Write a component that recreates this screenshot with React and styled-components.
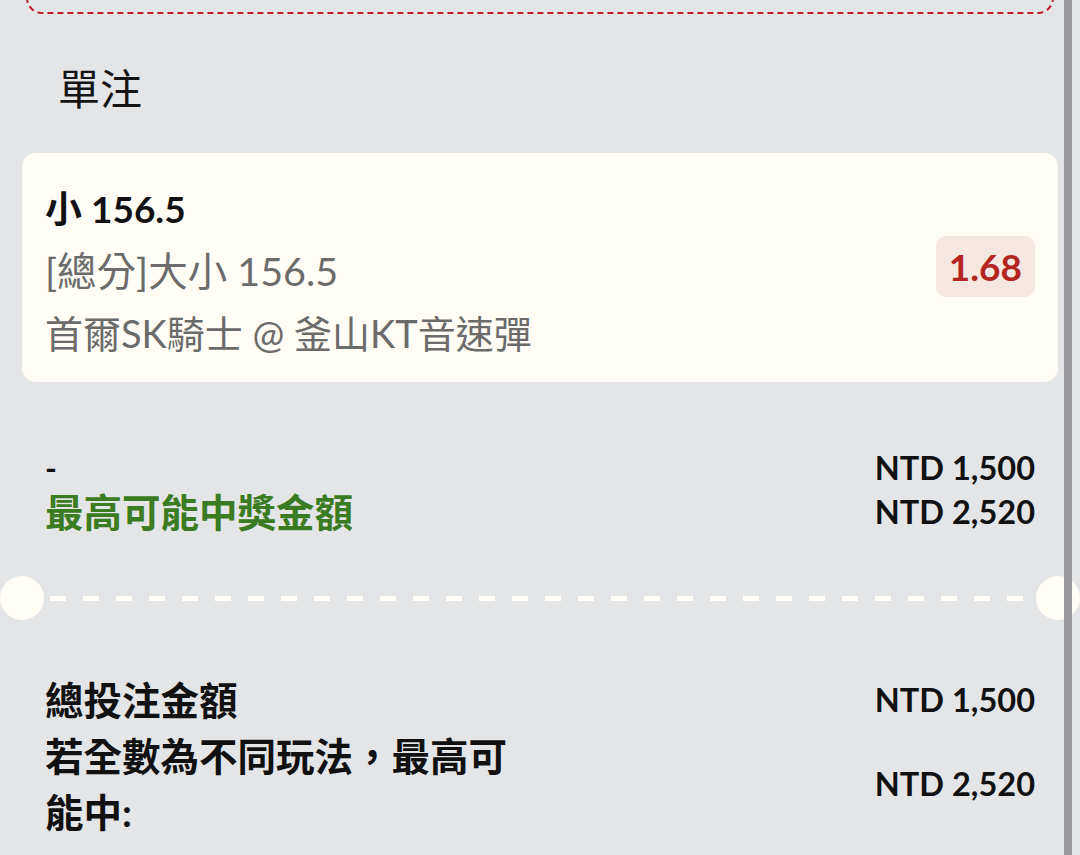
import React from 'react';
import styled, { createGlobalStyle } from 'styled-components';

const GlobalStyle = createGlobalStyle`
  html, body {
    margin: 0;
    padding: 0;
    background: #e4e5e7;
  }
  body {
    font-family: Lato, "Noto Sans CJK TC", "Noto Sans", sans-serif;
    color: #111;
  }
`;

const Page = styled.div`
  position: relative;
  width: 1080px;
  height: 855px;
  overflow: hidden;
  background: #e4e5e7;
`;

const ScrollEdge = styled.div`
  position: absolute;
  top: 0;
  bottom: 0;
  right: 8px;
  width: 8px;
  background: #9a9a9c;
  z-index: 2;
`;

const Content = styled.div`
  padding: 0 22px;
`;

const TicketEdge = styled.div`
  height: 30px;
  margin: -18px 4px 0;
  border: 2.5px dashed #bf1f2a;
  border-top: none;
  border-radius: 0 0 16px 16px;
`;

const SectionTitle = styled.h2`
  margin: 50px 0 0;
  padding-left: 36px;
  font-size: 42px;
  line-height: 50px;
  font-weight: 400;
  color: #151515;
`;

const BetCard = styled.div`
  margin-top: 39px;
  background: #fffdf5;
  border-radius: 14px;
  padding: 25px 23px 18px;
  display: flex;
  align-items: center;
  justify-content: space-between;
`;

const BetInfo = styled.div`
  display: flex;
  flex-direction: column;
`;

const Selection = styled.div`
  font-size: 37px;
  line-height: 62px;
  font-weight: 700;
  color: #111;
`;

const BetLine = styled.div`
  font-size: ${p => p.$size || 38}px;
  line-height: 62px;
  color: #6b6b6b;
`;

const Odds = styled.div`
  background: #f7e7e1;
  color: #b3261f;
  font-weight: 700;
  font-size: 37px;
  line-height: 61px;
  padding: 0 13px;
  margin-bottom: 9px;
  border-radius: 10px;
`;

const AmountGrid = styled.div`
  display: grid;
  grid-template-columns: 1fr auto;
  align-items: center;
  padding: 0 23px;
  margin-top: ${p => p.$top}px;
`;

const Label = styled.div`
  font-size: ${p => p.$size || 38.5}px;
  line-height: ${p => p.$lh || 48}px;
  font-weight: 700;
  color: ${p => p.$color || '#111'};
  max-width: ${p => p.$max ? p.$max + 'px' : 'none'};
`;

const Amount = styled.div`
  font-size: 32.5px;
  line-height: ${p => p.$lh || 44}px;
  font-weight: 700;
  color: #111;
  text-align: right;
`;

const Separator = styled.div`
  display: flex;
  align-items: center;
  margin: 40px -22px 0;
  height: 44px;
`;

const Notch = styled.div`
  width: 44px;
  height: 44px;
  border-radius: 50%;
  background: #fffdf5;
  flex-shrink: 0;
`;

const DashLine = styled.div`
  flex: 1;
  height: 5px;
  margin: 0 6px;
  background: repeating-linear-gradient(
    to right,
    #fffdf5 0,
    #fffdf5 16px,
    transparent 16px,
    transparent 33px
  );
`;

const bet = {
  selection: '小 156.5',
  market: '[總分]大小 156.5',
  match: '首爾SK騎士 @ 釜山KT音速彈',
  odds: '1.68',
  stake: 'NTD 1,500',
  payout: 'NTD 2,520',
};

export default function App() {
  return (
    <Page>
      <GlobalStyle />
      <ScrollEdge />
      <Content>
        <TicketEdge />
        <SectionTitle>單注</SectionTitle>

        <BetCard>
          <BetInfo>
            <Selection>{bet.selection}</Selection>
            <BetLine $size={39.5}>{bet.market}</BetLine>
            <BetLine>{bet.match}</BetLine>
          </BetInfo>
          <Odds>{bet.odds}</Odds>
        </BetCard>

        <AmountGrid $top={66}>
          <Label $size={32} $lh={40}>-</Label>
          <Amount $lh={40}>{bet.stake}</Amount>
          <Label $color="#3b7b22">最高可能中獎金額</Label>
          <Amount>{bet.payout}</Amount>
        </AmountGrid>

        <Separator>
          <Notch />
          <DashLine />
          <Notch />
        </Separator>

        <AmountGrid $top={52}>
          <Label $lh={56}>總投注金額</Label>
          <Amount $lh={56}>{bet.stake}</Amount>
          <Label $lh={56} $max={480}>若全數為不同玩法，最高可能中:</Label>
          <Amount $lh={56}>{bet.payout}</Amount>
        </AmountGrid>
      </Content>
    </Page>
  );
}
